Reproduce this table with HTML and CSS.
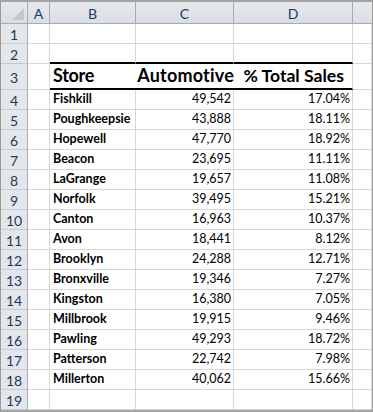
FILE: index.html
```html
<!DOCTYPE html>
<html>
<head>
<meta charset="utf-8">
<link rel="stylesheet" href="styles.css">
</head>
<body>
<div class="sheet">
  <div class="grid">
    <div class="hd corner"></div>
    <div class="hd col">A</div>
    <div class="hd col">B</div>
    <div class="hd col">C</div>
    <div class="hd col">D</div>
    <div class="hd col last"></div>

    <div class="hd row">1</div><div class="c"></div><div class="c"></div><div class="c"></div><div class="c"></div><div class="c"></div>
    <div class="hd row">2</div><div class="c"></div><div class="c top"></div><div class="c top"></div><div class="c top"></div><div class="c"></div>
    <div class="hd row">3</div><div class="c"></div>
    <div class="c th l noright">Store</div>
    <div class="c th r noright">Automotive</div>
    <div class="c th r pct">% Total Sales</div>
    <div class="c"></div>

    <div class="hd row">4</div><div class="c"></div><div class="c name">Fishkill</div><div class="c num">49,542</div><div class="c num">17.04%</div><div class="c"></div>
    <div class="hd row">5</div><div class="c"></div><div class="c name">Poughkeepsie</div><div class="c num">43,888</div><div class="c num">18.11%</div><div class="c"></div>
    <div class="hd row">6</div><div class="c"></div><div class="c name">Hopewell</div><div class="c num">47,770</div><div class="c num">18.92%</div><div class="c"></div>
    <div class="hd row">7</div><div class="c"></div><div class="c name">Beacon</div><div class="c num">23,695</div><div class="c num">11.11%</div><div class="c"></div>
    <div class="hd row">8</div><div class="c"></div><div class="c name">LaGrange</div><div class="c num">19,657</div><div class="c num">11.08%</div><div class="c"></div>
    <div class="hd row">9</div><div class="c"></div><div class="c name">Norfolk</div><div class="c num">39,495</div><div class="c num">15.21%</div><div class="c"></div>
    <div class="hd row">10</div><div class="c"></div><div class="c name">Canton</div><div class="c num">16,963</div><div class="c num">10.37%</div><div class="c"></div>
    <div class="hd row">11</div><div class="c"></div><div class="c name">Avon</div><div class="c num">18,441</div><div class="c num">8.12%</div><div class="c"></div>
    <div class="hd row">12</div><div class="c"></div><div class="c name">Brooklyn</div><div class="c num">24,288</div><div class="c num">12.71%</div><div class="c"></div>
    <div class="hd row">13</div><div class="c"></div><div class="c name">Bronxville</div><div class="c num">19,346</div><div class="c num">7.27%</div><div class="c"></div>
    <div class="hd row">14</div><div class="c"></div><div class="c name">Kingston</div><div class="c num">16,380</div><div class="c num">7.05%</div><div class="c"></div>
    <div class="hd row">15</div><div class="c"></div><div class="c name">Millbrook</div><div class="c num">19,915</div><div class="c num">9.46%</div><div class="c"></div>
    <div class="hd row">16</div><div class="c"></div><div class="c name">Pawling</div><div class="c num">49,293</div><div class="c num">18.72%</div><div class="c"></div>
    <div class="hd row">17</div><div class="c"></div><div class="c name">Patterson</div><div class="c num">22,742</div><div class="c num">7.98%</div><div class="c"></div>
    <div class="hd row">18</div><div class="c"></div><div class="c name">Millerton</div><div class="c num">40,062</div><div class="c num">15.66%</div><div class="c"></div>
    <div class="hd row">19</div><div class="c"></div><div class="c"></div><div class="c"></div><div class="c"></div><div class="c"></div>
  </div>
</div>
</body>
</html>
```
FILE: styles.css
```css
* { box-sizing: border-box; }
html, body { margin: 0; padding: 0; background: #ffffff; }
body { font-family: Lato, "Open Sans", sans-serif; }

.sheet {
  width: 373px;
  height: 412px;
  border: 1px solid #9c9c9c;
  border-top: 2px solid #a4a4a4;
  border-bottom: 2px solid #a4a4a4;
  background: #ffffff;
  overflow: hidden;
}

.grid {
  display: grid;
  grid-template-columns: 27px 22px 86px 98px 119px 19px;
  grid-template-rows: 22px 20px 20px 26px repeat(16, 20px);
}

.hd {
  background: linear-gradient(#e6e9ed, #dadee3);
  color: #1e3a5a;
  font-size: 14px;
  display: flex;
  align-items: center;
  justify-content: center;
  border-right: 1px solid #a7acb2;
  border-bottom: 1px solid #a7acb2;
}
.hd.col { padding-top: 1px; }
.hd.last { border-right: none; }
.hd.row {
  background: #e3e6ea;
  border-bottom: 1px solid #c5cad0;
  border-right: 1px solid #a7acb2;
  padding-top: 2px;
}

.corner { position: relative; }
.corner::after {
  content: "";
  position: absolute;
  right: 3px;
  bottom: 3px;
  width: 12px;
  height: 12px;
  background: #c4c9cf;
  clip-path: polygon(100% 0, 100% 100%, 0 100%);
}

.c {
  border-right: 1px solid #d6d6d6;
  border-bottom: 1px solid #d6d6d6;
  display: flex;
  align-items: flex-end;
  color: #000;
  white-space: nowrap;
  overflow: visible;
}
.c.top { border-bottom: 2px solid #000; }
.c.noright { border-right: none; }
.th {
  font-weight: 700;
  font-size: 18px;
  border-bottom: 2px solid #000;
  padding-bottom: 2px;
}
.th.l { padding-left: 3px; justify-content: flex-start; letter-spacing: -0.3px; }
.th.r { padding-right: 0; justify-content: flex-end; letter-spacing: 0.2px; }
.th.pct { padding-right: 8px; letter-spacing: 0; font-size: 17.6px; }

.name {
  font-weight: 700;
  font-size: 12.5px;
  padding-left: 3px;
  padding-bottom: 3px;
}
.num {
  font-size: 12.5px;
  justify-content: flex-end;
  padding-right: 2px;
  padding-bottom: 3px;
}
```
